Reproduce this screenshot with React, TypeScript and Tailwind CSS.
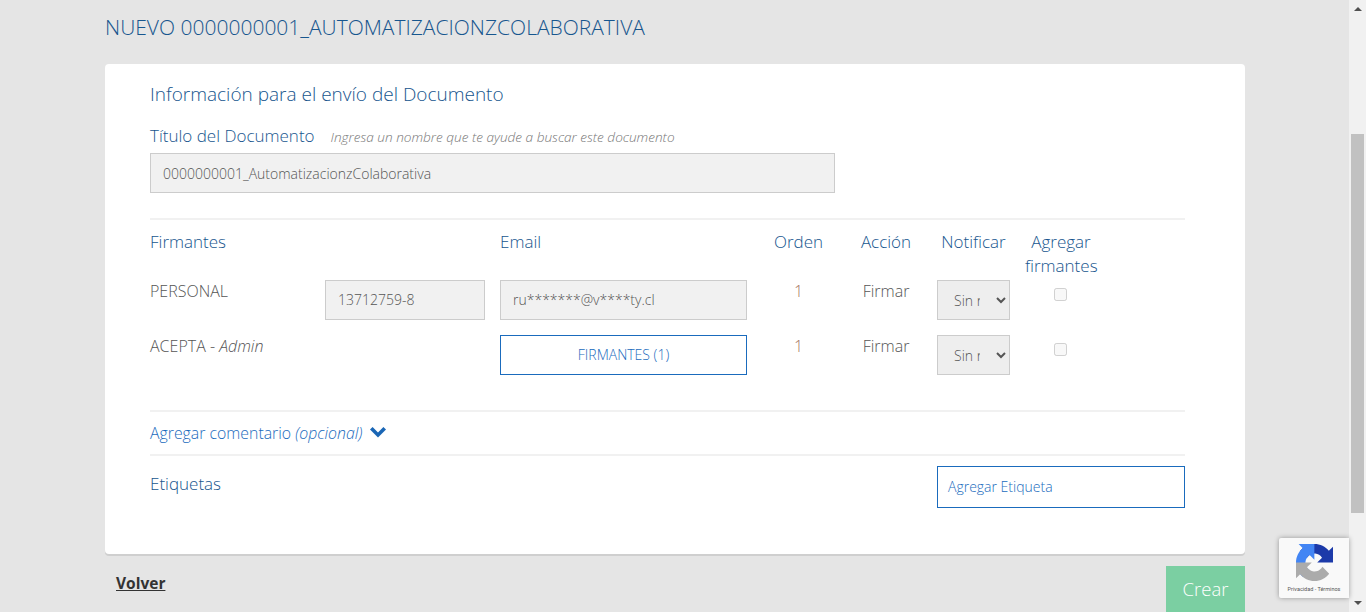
export default function App() {
  return (
    <div className="flex h-[612px] overflow-hidden bg-[#e5e5e5] font-['Open_Sans',sans-serif] font-light text-[#555]">
      <main className="relative w-[1349px] shrink-0 pl-[105px]">
        <h1 className="pt-[13px] pb-[23px] text-[21px] leading-[28px] font-light text-[#17568e]">
          NUEVO 0000000001_AUTOMATIZACIONZCOLABORATIVA
        </h1>

        <section className="h-[490px] w-[1140px] rounded-[4px] bg-white pt-[16px] pr-[60px] pl-[45px] shadow-[0_2px_0_#cfcfcf]">
          <h2 className="text-[19px] leading-[28px] font-light text-[#17568e]">Información para el envío del Documento</h2>

          <div className="mt-[16px] flex items-baseline">
            <label className="text-[17px] leading-[24px] text-[#17568e]">Título del Documento</label>
            <span className="ml-[16px] text-[13.6px] italic text-[#777]">Ingresa un nombre que te ayude a buscar este documento</span>
          </div>
          <div className="mt-[5px] flex h-[40px] w-[685px] items-center border border-[#ccc] bg-[#f1f1f1] pl-[12px] text-[14px] text-[#555]">
            0000000001_AutomatizacionzColaborativa
          </div>

          <div className="mt-[25px] border-t-2 border-[#f1f1f1] pt-[10px]">
            <div className="grid grid-cols-[175px_175px_262px_73px_102px_88px_72px] text-[17px] leading-[24px] text-[#17568e]">
              <div>Firmantes</div>
              <div />
              <div>Email</div>
              <div className="text-center">Orden</div>
              <div className="text-center">Acción</div>
              <div className="w-[73px] text-center">Notificar</div>
              <div className="text-center">Agregar firmantes</div>
            </div>

            <div className="mt-[2px] grid grid-cols-[175px_175px_262px_73px_102px_88px_72px] text-[16px] leading-[22px]">
              <div>PERSONAL</div>
              <div className="flex h-[40px] w-[160px] items-center border border-[#ccc] bg-[#f1f1f1] pl-[12px] text-[14px]">13712759-8</div>
              <div className="flex h-[40px] w-[247px] items-center border border-[#ccc] bg-[#f1f1f1] pl-[12px] text-[14px]">ru*******@v****ty.cl</div>
              <div className="text-center text-[#a5725f]">1</div>
              <div className="text-center">Firmar</div>
              <NotifySelect />
              <div className="flex justify-center pt-[8px] pr-[2px]">
                <input type="checkbox" disabled className="h-[13px] w-[13px]" />
              </div>
            </div>

            <div className="mt-[15px] grid grid-cols-[175px_175px_262px_73px_102px_88px_72px] text-[16px] leading-[22px]">
              <div>
                ACEPTA - <em>Admin</em>
              </div>
              <div />
              <button className="h-[40px] w-[247px] border border-[#1a6bbd] bg-white text-[14px] font-light text-[#1a6bbd]">FIRMANTES (1)</button>
              <div className="text-center text-[#a5725f]">1</div>
              <div className="text-center">Firmar</div>
              <NotifySelect />
              <div className="flex justify-center pt-[8px] pr-[2px]">
                <input type="checkbox" disabled className="h-[13px] w-[13px]" />
              </div>
            </div>
          </div>

          <div className="mt-[35px] flex h-[44px] items-center border-t-2 border-[#f1f1f1] text-[15.85px] text-[#1a6bbd]">
            <span className="mt-[2px]">
              Agregar comentario <em>(opcional)</em>
            </span>
            <svg viewBox="0 0 16 11" className="mb-[2px] ml-[8px] h-[11px] w-[16px] fill-[#1a66b5]">
              <path d="M2.6 0 8 5.4 13.4 0 16 2.6 8 10.6 0 2.6Z" />
            </svg>
          </div>

          <div className="flex justify-between border-t-2 border-[#f1f1f1] pt-[10px]">
            <span className="pt-[6px] text-[17px] leading-[24px] text-[#17568e]">Etiquetas</span>
            <button className="h-[42px] w-[248px] border border-[#1a6bbd] bg-white pb-[2px] pl-[10px] text-left text-[14px] font-light text-[#1a6bbd]">Agregar Etiqueta</button>
          </div>
        </section>

        <div className="flex w-[1140px] items-start justify-between">
          <a className="mt-[17px] ml-[11px] text-[15.5px] leading-[24px] font-bold text-[#333] underline">Volver</a>
          <button className="mt-[12px] h-[60px] w-[79px] bg-[#7bcfa2] pb-[15px] text-[18.5px] font-light text-white">Crear</button>
        </div>

        {/* reCAPTCHA badge */}
        <div className="absolute top-[538px] right-0 flex h-[60px] w-[70px] flex-col items-center rounded-l-[2px] bg-[#f9f9f9] pt-[6px] shadow-[0_0_5px_rgba(0,0,0,0.35)]">
          <svg viewBox="0 0 64 64" className="h-[37px] w-[37px]">
            <path d="M64 31.955l-.033-1.37V4.687l-7.16 7.16C50.948 4.674 42.033.093 32.05.093c-10.4 0-19.622 4.96-25.458 12.64l11.736 11.86a15.55 15.55 0 0 1 4.754-5.334c2.05-1.6 4.952-2.906 8.968-2.906.485 0 .86.057 1.135.163 4.976.393 9.288 3.14 11.828 7.124l-8.307 8.307c10.522-.04 22.4-.066 27.295.005" fill="#1c3aa9" />
            <path d="M31.862.094l-1.37.033H4.594l7.16 7.16C4.58 13.147 0 22.06 0 32.045c0 10.4 4.96 19.622 12.64 25.458l11.86-11.736a15.55 15.55 0 0 1-5.334-4.754c-1.6-2.05-2.906-4.952-2.906-8.968 0-.485.057-.86.163-1.135.393-4.976 3.14-9.288 7.124-11.828l8.307 8.307c-.04-10.522-.066-22.4.005-27.295" fill="#4285f4" />
            <path d="M.001 32.045l.033 1.37v25.898l7.16-7.16c5.86 7.173 14.774 11.754 24.76 11.754 10.4 0 19.622-4.96 25.458-12.64l-11.736-11.86a15.55 15.55 0 0 1-4.754 5.334c-2.05 1.6-4.952 2.906-8.968 2.906-.485 0-.86-.057-1.135-.163-4.976-.393-9.288-3.14-11.828-7.124l8.307-8.307c-10.522.04-22.4.066-27.295-.005" fill="#ababab" />
          </svg>
          <span className="mt-[3px] font-['Roboto',sans-serif] text-[5.5px] leading-[10px] font-normal whitespace-nowrap text-[#555]">Privacidad - Términos</span>
        </div>
      </main>

      {/* page scrollbar */}
      <aside className="flex w-[17px] shrink-0 flex-col items-center bg-[#f1f1f1]">
        <div className="mt-[7px] h-0 w-0 border-x-[4px] border-b-[4px] border-x-transparent border-b-[#505050]" />
        <div className="mt-[123px] h-[379px] w-[13px] bg-[#c1c1c1]" />
        <div className="mt-[88px] h-0 w-0 border-x-[4px] border-t-[4px] border-x-transparent border-t-[#505050]" />
      </aside>
    </div>
  );
}

function NotifySelect() {
  return (
    <select defaultValue="n" className="h-[40px] w-[73px] border border-[#ccc] bg-[#eee] pr-[13px] pl-[12px] text-[14px] font-light text-[#555]">
      <option value="n">Sin notificar</option>
    </select>
  );
}
